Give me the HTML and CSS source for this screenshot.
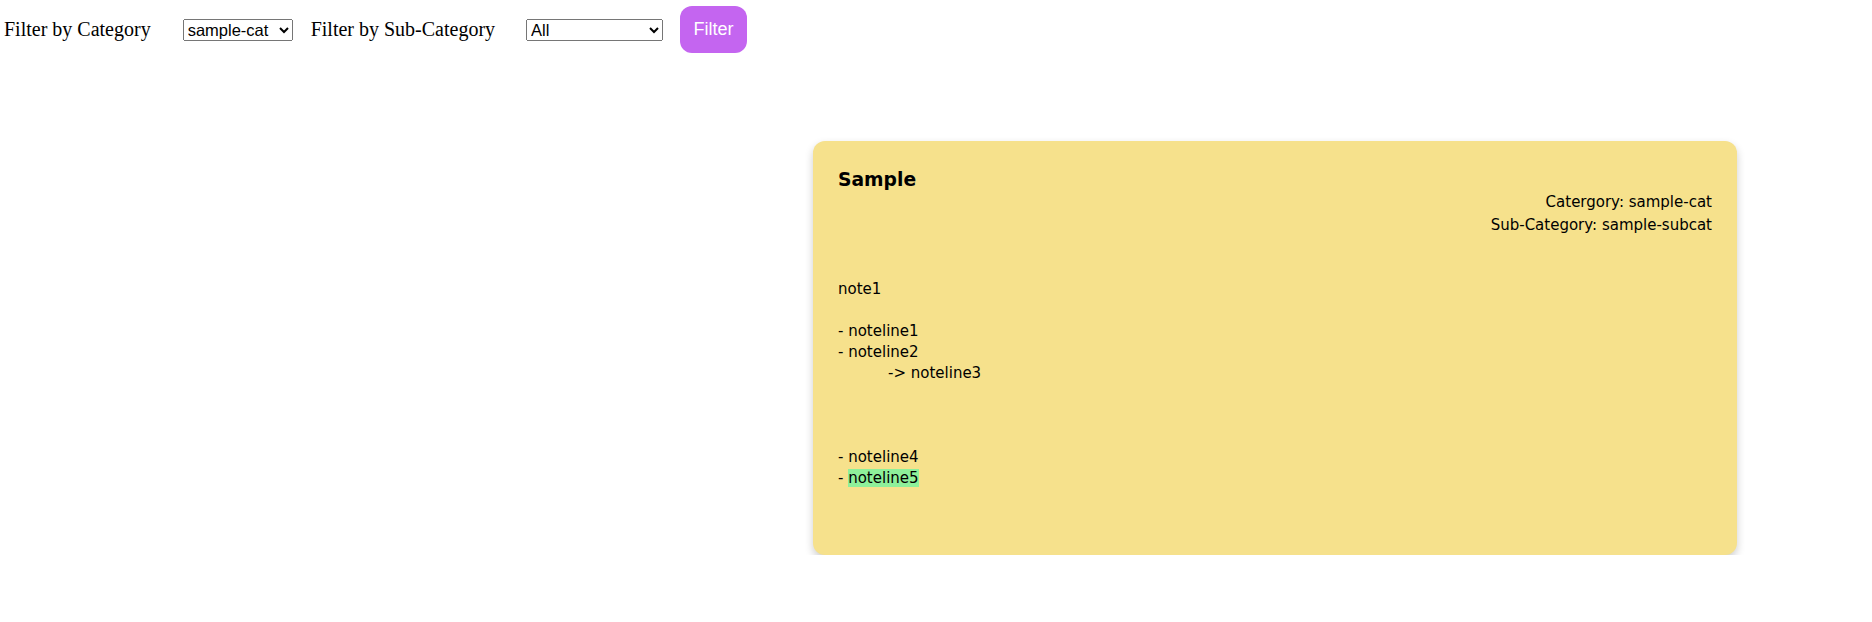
FILE: index.html
```html
<!DOCTYPE html>
<html>
<head>
<meta charset="utf-8">
<link rel="stylesheet" href="styles.css">
</head>
<body>
<div class="filters">
  <label class="filter-label label-cat">Filter by Category</label>
  <select class="select select-cat"><option>sample-cat</option></select>
  <label class="filter-label label-sub">Filter by Sub-Category</label>
  <select class="select select-sub"><option>All</option><option>sample-subcat</option></select>
  <button class="filter-btn">Filter</button>
</div>
<div class="notes">
  <div class="card">
    <h3 class="card-title">Sample</h3>
    <div class="meta">
      <div>Catergory: sample-cat</div>
      <div>Sub-Category: sample-subcat</div>
    </div>
    <div class="note-body">note1

- noteline1
- noteline2
	-&gt; noteline3



- noteline4
- <mark class="hl">noteline5</mark></div>
  </div>
</div>
</body>
</html>
```
FILE: styles.css
```css
html, body {
  margin: 0;
  padding: 0;
  background: #ffffff;
}

body {
  font-family: "Liberation Serif", "Times New Roman", serif;
  color: #000;
}

.filters {
  display: flex;
  align-items: center;
  padding: 6px 4px 0 4px;
}

.filter-label {
  font-family: "Liberation Serif", "Times New Roman", serif;
  font-size: 20px;
  margin-right: 32px;
}

.label-sub {
  margin-right: 31px;
}

.select {
  font-family: "Liberation Sans", Arial, sans-serif;
  font-size: 16.5px;
  height: 22px;
  box-sizing: border-box;
  margin: 0 18px 0 0;
  color: #000;
}

.select-cat {
  width: 110px;
}

.select-sub {
  width: 137px;
  margin-right: 17px;
}

.filter-btn {
  font-family: "Liberation Sans", Arial, sans-serif;
  font-size: 18px;
  color: #ffffff;
  background: #c465f0;
  border: none;
  border-radius: 12px;
  padding: 13px 13.5px;
  line-height: 21px;
}

.notes {
  display: flex;
  justify-content: flex-end;
  padding: 88px 135px 0 0;
}

.card {
  width: 924px;
  box-sizing: border-box;
  background: #f6e18c;
  border-radius: 12px;
  box-shadow: 0 4px 8px rgba(0, 0, 0, 0.2);
  padding: 28px 25px 66px 25px;
  font-family: "DejaVu Sans", Verdana, sans-serif;
  font-size: 15px;
}

.card-title {
  margin: 0;
  font-size: 18.72px;
  line-height: 22px;
  font-weight: bold;
}

.meta {
  text-align: right;
  line-height: 23px;
}

.note-body {
  margin-top: 42px;
  white-space: pre-wrap;
  line-height: 21px;
  tab-size: 50px;
}

.hl {
  background: #8ef09a;
  color: inherit;
}
```
